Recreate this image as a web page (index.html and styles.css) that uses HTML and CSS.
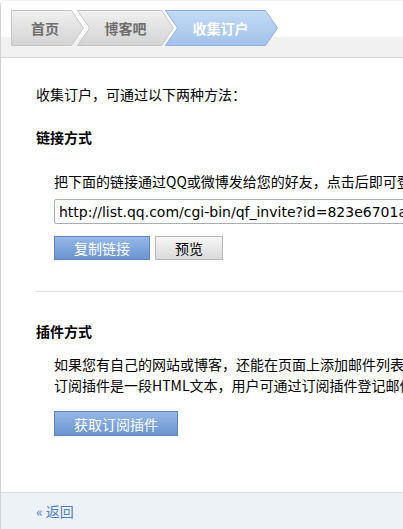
FILE: index.html
```html
<!DOCTYPE html>
<html lang="zh-CN">

<head>
    <meta charset="UTF-8" />
    <title>收集订户</title>
    <link rel="stylesheet" href="styles.css">
</head>

<body>
    <div class="frame">
        <div class="header">
            <div class="crumbs">
                <svg class="crumb-bg" width="270" height="37" viewBox="0 0 270 37">
                    <defs>
                        <linearGradient id="gray" x1="0" y1="0" x2="0" y2="1">
                            <stop offset="0" stop-color="#f0f0f0" />
                            <stop offset="1" stop-color="#d3d3d3" />
                        </linearGradient>
                        <linearGradient id="blue" x1="0" y1="0" x2="0" y2="1">
                            <stop offset="0" stop-color="#c2dbf6" />
                            <stop offset="1" stop-color="#a3c2ea" />
                        </linearGradient>
                    </defs>
                    <polygon points="0.5,0.5 60.5,0.5 72.5,18 60.5,35.5 0.5,35.5" fill="url(#gray)" stroke="#c6c6c6" />
                    <polygon points="66.5,0.5 150.5,0.5 162.5,18 150.5,35.5 66.5,35.5 78.5,18" fill="url(#gray)" stroke="#c6c6c6" />
                    <polygon points="154.5,0.5 254.5,0.5 266.5,18 254.5,35.5 154.5,35.5 166.5,18" fill="url(#blue)" stroke="#8fb1dd" />
                </svg>
                <a class="crumb c1" href="#">首页</a>
                <a class="crumb c2" href="#">博客吧</a>
                <span class="crumb c3 current">收集订户</span>
            </div>
        </div>

        <div class="content">
            <p class="intro">收集订户，可通过以下两种方法：</p>

            <h3 class="title">链接方式</h3>
            <div class="block">
                <p class="desc">把下面的链接通过QQ或微博发给您的好友，点击后即可登记邮件地址订阅您的邮件列表。</p>
                <input class="link-input" type="text" value="http://list.qq.com/cgi-bin/qf_invite?id=823e6701a4b2c9d0" />
                <div class="btns">
                    <button class="btn btn-blue copy">复制链接</button>
                    <button class="btn btn-gray preview">预览</button>
                </div>
            </div>

            <div class="divider"></div>

            <h3 class="title title2">插件方式</h3>
            <div class="block">
                <p class="desc desc2">如果您有自己的网站或博客，还能在页面上添加邮件列表的订阅插件。<br>订阅插件是一段HTML文本，用户可通过订阅插件登记邮件地址订阅您的邮件列表。</p>
                <button class="btn btn-blue plugin">获取订阅插件</button>
            </div>
        </div>

        <div class="footer">
            <a class="back" href="#">« 返回</a>
        </div>
    </div>
</body>

</html>
```

FILE: styles.css
```css
body {
    margin: 0;
    background-color: #ffffff;
    font-family: "Noto Sans CJK SC", "DejaVu Sans", sans-serif;
    font-size: 14px;
    color: #000000;
    overflow: hidden;
}

.frame {
    width: 700px;
    border-left: 1px solid #d2d2d2;
    border-top: 1px solid #f0f0f0;
    border-top-left-radius: 5px;
}

.header {
    height: 56px;
    background: linear-gradient(#ffffff 36px, #f1f1f1 36px);
    border-bottom: 1px solid #d6d6d6;
    padding-top: 9px;
    padding-left: 10px;
    box-sizing: content-box;
    height: 47px;
}

.crumbs {
    position: relative;
    display: flex;
    height: 37px;
}

.crumb-bg {
    position: absolute;
    top: 0;
    left: 0;
}

.crumb {
    position: relative;
    line-height: 37px;
    text-align: center;
    font-weight: bold;
    font-size: 14px;
    color: #6e6e6e;
    text-decoration: none;
}

.c1 {
    width: 68px;
}

.c2 {
    width: 93px;
}

.c3 {
    width: 97px;
}

.crumb.current {
    color: #ffffff;
}

.content {
    padding: 26px 0 0 35px;
    height: 408px;
}

.content p,
.content h3 {
    margin: 0;
}

.intro {
    line-height: 20px;
}

.title {
    margin-top: 23px !important;
    line-height: 20px;
    font-size: 14px;
    font-weight: bold;
}

.block {
    padding-left: 18px;
}

.desc {
    margin-top: 24px !important;
    line-height: 20px;
    white-space: nowrap;
}

.link-input {
    display: block;
    margin-top: 8px;
    width: 460px;
    height: 25px;
    box-sizing: border-box;
    border: 1px solid #a7adb5;
    border-radius: 2px;
    padding: 0 4px;
    font-family: "DejaVu Sans", sans-serif;
    font-size: 14px;
    color: #000000;
}

.btns {
    display: flex;
    gap: 5px;
    margin-top: 12px;
}

.btn {
    height: 24px;
    box-sizing: border-box;
    padding: 0;
    font-family: "Noto Sans CJK SC", sans-serif;
    font-size: 14px;
    line-height: 22px;
    cursor: pointer;
}

.btn-blue {
    background: linear-gradient(#94b8e8, #6b95d0);
    border: 1px solid #5d86c2;
    color: #ffffff;
}

.btn-gray {
    background: linear-gradient(#f6f6f6, #dadada);
    border: 1px solid #b8b8b8;
    color: #000000;
}

.copy {
    width: 96px;
}

.preview {
    width: 68px;
}

.divider {
    margin-top: 31px;
    border-top: 1px solid #dddddd;
}

.title2 {
    margin-top: 29px !important;
}

.desc2 {
    margin-top: 13px !important;
    line-height: 21px;
}

.plugin {
    display: block;
    margin-top: 15px;
    width: 124px;
    height: 25px;
}

.footer {
    height: 36px;
    background-color: #edf2f7;
    border-top: 1px solid #dadada;
    padding-left: 35px;
    line-height: 36px;
}

.back {
    color: #4e7fc4;
    text-decoration: none;
    font-size: 14px;
}
```
